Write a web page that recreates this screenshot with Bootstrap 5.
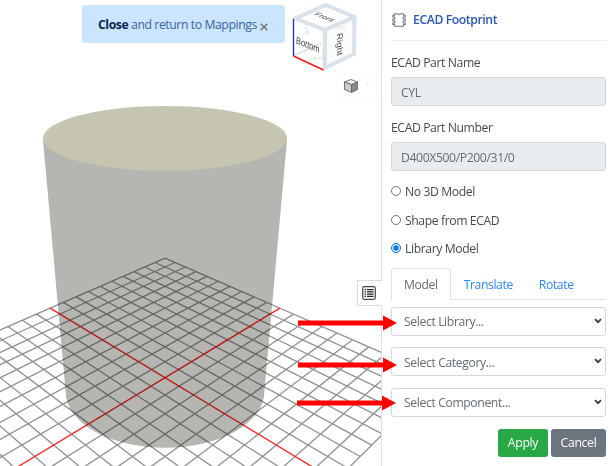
<!DOCTYPE html>
<html lang="en">
<head>
<meta charset="utf-8">
<title>ECAD Footprint</title>
<link rel="stylesheet" href="https://cdn.jsdelivr.net/npm/bootstrap@5.3.0/dist/css/bootstrap.min.css">
<style>
body{font-family:"Open Sans","Noto Sans",sans-serif;font-size:12.2px;letter-spacing:-.4px;color:#454a50;line-height:18px;background:#fff}
.app{width:611px;height:466px}
.viewer{width:381px}
.scene{width:381px;height:466px}
.notice{left:82px;top:5px;width:203px;height:38px;padding:1px 0 0 16px;background:#cce5ff;color:#38669b;border-radius:3px;white-space:nowrap}
.notice strong{color:#002752}
.notice svg{margin-left:3px}
.side-toggle{left:357px;top:280px;width:25px;height:26px;border:1px solid #d9dbde;border-right:0;background:#fff}
.side{width:230px;border-left:1px solid #dee2e6;padding:0 5px 0 9px}
.side-title{height:41px;border-bottom:1px solid #e9ebed;color:#2a56b0;font-weight:600;padding-left:1px}
.side-title svg{margin-right:7px}
.lbl{height:18px;margin:13px 0 5px}
.side .form-control,.side .form-select{height:29px;min-height:0;font-size:12.2px;letter-spacing:-.38px;line-height:18px;border-color:#d3d8dd;border-radius:3px;color:#656c73}
.side .form-control{padding:5px 9px 3px;background:#e9ecef}
.side .form-select{padding:5px 12px 3px;background-image:none}
.pick .chev{right:4px;top:11px}
.choices{padding-top:12px}
.opt{height:18px;margin-bottom:10.5px}
.opt .form-check-input{width:10px;height:10px;margin:-2px 4px 0 0;border-color:#777;float:none;background-image:none}
.opt .form-check-input:checked{background:#0d78ee;border-color:#0d78ee;box-shadow:inset 0 0 0 1.2px #fff}
.nav-tabs{height:32px;margin:-1px 0 7px}
.nav-tabs .nav-link{height:32px;padding:7px 12px 5px;color:#2d87fb;border-radius:3px 3px 0 0}
.nav-tabs .nav-link.active{color:#656c73}
.picks{gap:11.5px}
.acts{gap:3px;margin-top:12px}
.acts .btn{height:28px;font-size:12.2px;letter-spacing:-.3px;line-height:18px;padding:4px 0;border-radius:3px;border:0;color:#fff}
.go{width:50px;background:#28a745}
.no{width:55px;background:#6c757d}
.arrows{left:0;top:0;pointer-events:none}
.cube-label{font-family:"Liberation Sans",Arial,sans-serif;letter-spacing:0}
</style>
</head>
<body class="overflow-hidden">
<div class="app d-flex position-relative overflow-hidden">
  <main class="viewer flex-shrink-0 position-relative">
    <svg class="scene d-block" viewBox="0 0 381 466">
      <path d="M43 140 L165 150 L287 140 L264.300 392 A99.300 55.800 0 0 1 65.700 392Z" fill="#b5b6b1"/>
      <ellipse cx="165" cy="138.400" rx="122" ry="32.400" fill="#c5c5b2"/>
      <g id="grid" fill="none" style="mix-blend-mode:multiply"></g>
      <!-- orientation cube -->
      <g fill="#fff" stroke="#dae2e9" stroke-width="4" stroke-linejoin="round">
        <path d="M295 18.500 L326 5 L354.500 17 L325 30Z"/>
        <path d="M325 30 L354.500 17 L354 54 L324.500 68Z" fill="#fbfcfc"/>
        <path d="M295 18.500 L325 30 L324.500 68 L294 56Z" stroke="none"/>
        <path d="M295 18.500 L325 30 L324.500 68" fill="none"/>
      </g>
      <path d="M295 55 L322 43" stroke="#d6ebd8" stroke-width="1.500"/>
      <path d="M293.500 19 V56" stroke="#2020ee" stroke-width="1.300"/>
      <path d="M293.500 56 L323.500 70" stroke="#ff1515" stroke-width="1.400"/>
      <g class="cube-label" fill="#d9d9d9" font-size="6.500">
        <text transform="matrix(0 1 -.9 .2 305 24)">Left</text>
        <text transform="matrix(.95 -.3 .2 .9 336 31)">Top</text>
        <text transform="matrix(.9 -.1 .4 .6 314 60)">Back</text>
      </g>
      <g class="cube-label" fill="#444" text-anchor="middle">
        <text font-size="8.500" transform="matrix(.87 .36 -.1 1.150 307.500 48)">Bottom</text>
        <text font-size="8.300" transform="matrix(.93 .38 -.75 .5 322.500 18.500)">Front</text>
        <text font-size="9.500" transform="matrix(0 1 -.85 .25 336.500 45)">Right</text>
      </g>
      <rect x="337.500" y="73.500" width="39" height="23" rx="2" fill="none" stroke="#fafafa"/>
      <g stroke="#666" stroke-width=".9" stroke-linejoin="round">
        <path d="M344.500 82 L351 79.500 L357.500 82 L351.500 84.500Z" fill="#f4f4f4"/>
        <path d="M344.500 82 L351.500 84.500 V92.500 L344.500 89.500Z" fill="#ccc"/>
        <path d="M357.500 82 L351.500 84.500 V92.500 L357.500 89.500Z" fill="#8a8a8a"/>
      </g>
      <path d="M365 83.500 h5 l-2.500 3z" fill="#f0f0f0"/>
    </svg>
    <div class="notice position-absolute d-flex align-items-center">
      <span><strong>Close</strong> and return to Mappings</span>
      <svg class="mt-1" width="8" height="8" viewBox="0 0 8 8"><path d="M.7.7 7.300 7.300M7.300.7.7 7.300" stroke="#777" stroke-width="1.600"/></svg>
    </div>
    <div class="side-toggle position-absolute d-flex align-items-center ps-1">
      <svg width="14" height="14" viewBox="0 0 14 14"><rect x=".7" y=".7" width="12.600" height="12.600" rx="1.800" fill="#fff" stroke="#444" stroke-width="1.200"/><path d="M2.500 3.700H4M2.500 5.900H4M2.500 8.100H4M2.500 10.300H4M5 3.700H11.600M5 5.900H11.600M5 8.100H11.600M5 10.300H11.600" stroke="#222" stroke-width="1.300"/></svg>
    </div>
  </main>
  <aside class="side flex-shrink-0">
    <div class="side-title d-flex align-items-center">
      <svg width="14" height="14" viewBox="0 0 14 14" fill="none" stroke="#777" stroke-width="1.100" stroke-linejoin="round"><path d="M2.500 .7H5.200Q7 2 8.800 .7H11.500V2.300H13.200V4H11.200V6H13.200V7.700H11.200V9.700H13.200V11.400H11.500V13.300H2.500V11.400H.8V9.700H2.800V7.700H.8V6H2.800V4H.8V2.300H2.500Z"/></svg>
      <span>ECAD Footprint</span>
    </div>
    <div class="lbl" id="l1">ECAD Part Name</div>
    <input class="form-control" value="CYL" disabled aria-labelledby="l1">
    <div class="lbl" id="l2">ECAD Part Number</div>
    <input class="form-control" value="D400X500/P200/31/0" disabled aria-labelledby="l2">
    <div class="choices">
      <label class="opt d-flex align-items-center"><input class="form-check-input" type="radio" name="m">No 3D Model</label>
      <label class="opt d-flex align-items-center"><input class="form-check-input" type="radio" name="m">Shape from ECAD</label>
      <label class="opt d-flex align-items-center"><input class="form-check-input" type="radio" name="m" checked>Library Model</label>
    </div>
    <ul class="nav nav-tabs">
      <li class="nav-item"><a class="nav-link active" href="#">Model</a></li>
      <li class="nav-item"><a class="nav-link" href="#">Translate</a></li>
      <li class="nav-item"><a class="nav-link" href="#">Rotate</a></li>
    </ul>
    <div class="picks d-grid">
      <div class="pick position-relative"><select class="form-select"><option>Select Library...</option></select><svg class="chev position-absolute" width="8" height="6" viewBox="0 0 8 6"><path d="M1 1.200 4 4.200 7 1.200" fill="none" stroke="#343a40" stroke-width="1.700"/></svg></div>
      <div class="pick position-relative"><select class="form-select"><option>Select Category...</option></select><svg class="chev position-absolute" width="8" height="6" viewBox="0 0 8 6"><path d="M1 1.200 4 4.200 7 1.200" fill="none" stroke="#343a40" stroke-width="1.700"/></svg></div>
      <div class="pick position-relative"><select class="form-select"><option>Select Component...</option></select><svg class="chev position-absolute" width="8" height="6" viewBox="0 0 8 6"><path d="M1 1.200 4 4.200 7 1.200" fill="none" stroke="#343a40" stroke-width="1.700"/></svg></div>
    </div>
    <div class="acts d-flex justify-content-end"><button class="btn go">Apply</button><button class="btn no">Cancel</button></div>
  </aside>
  <svg class="arrows position-absolute" width="611" height="466" fill="#f00">
    <path d="M298 320.500H383V315.500L397 323L383 330.500V325.500H298Z"/>
    <path d="M298 362.500H383V357.500L397 365L383 372.500V367.500H298Z"/>
    <path d="M297 400.500H382V395.500L396 403L382 410.500V405.500H297Z"/>
  </svg>
</div>
<script src="https://cdn.jsdelivr.net/npm/bootstrap@5.3.0/dist/js/bootstrap.bundle.min.js"></script>
<script>
// Ground plane: 20 x 20 cells in perspective, axes in red
const pt = (u, v) => {
  const s = u + v, w = 1 - 0.195 * s;
  return (165 + 137.3 * (u - v) / w).toFixed(2) + ' ' + (377.7 + 83.1 * s / w).toFixed(2);
};
let grey = '', red = '';
for (let i = -10; i <= 10; i++) {
  const k = i / 10;
  const d = 'M' + pt(k, -1) + 'L' + pt(k, 1) + 'M' + pt(-1, k) + 'L' + pt(1, k);
  if (i === 0) red += d; else grey += d;
}
document.getElementById('grid').innerHTML =
  '<path stroke="#909090" stroke-width="1.3" d="' + grey + '"/><path stroke="#ff2020" stroke-width="1.3" d="' + red + '"/>';
</script>
</body>
</html>
